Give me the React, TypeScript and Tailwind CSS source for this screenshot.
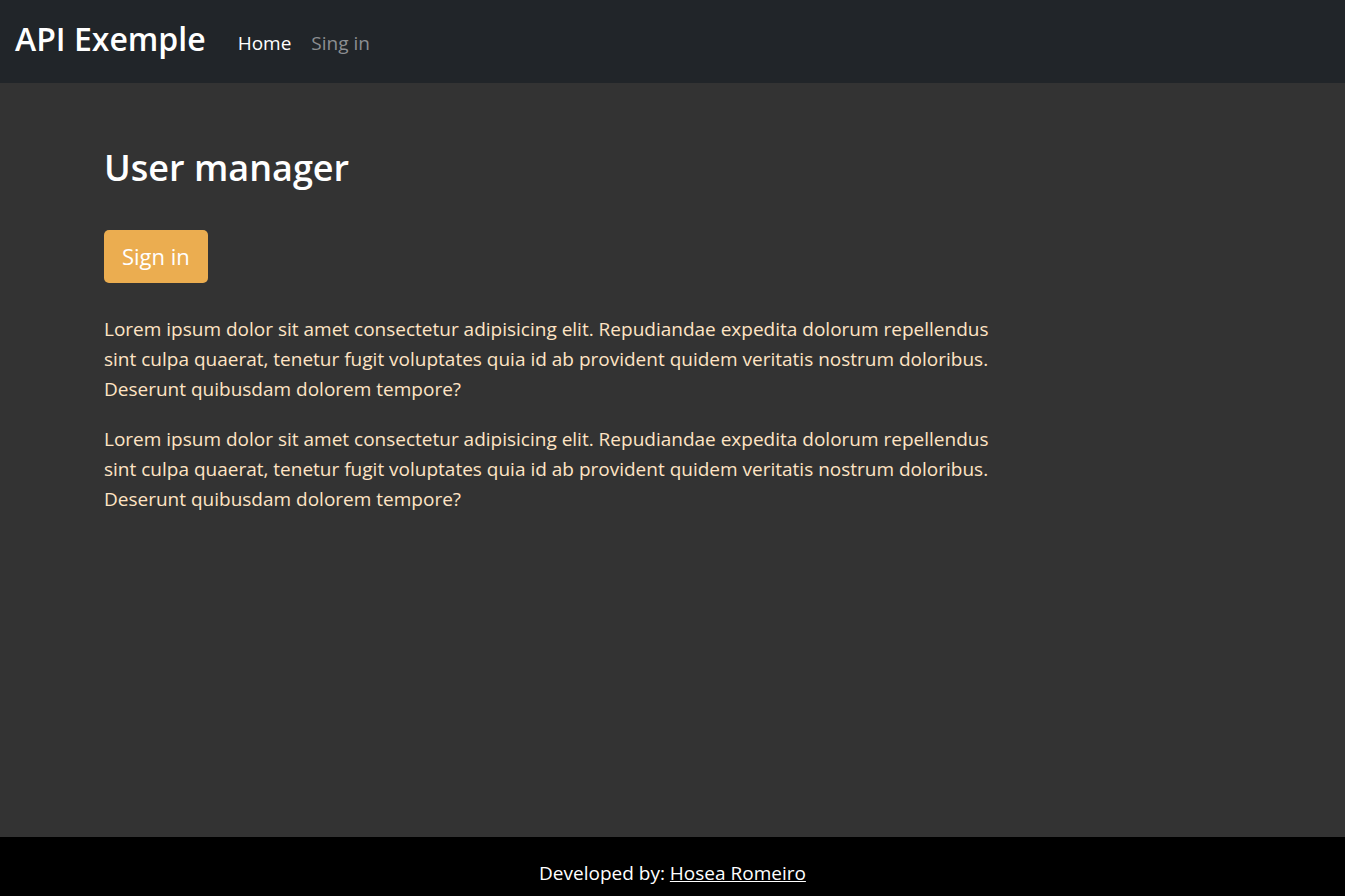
import React from "react";

const lorem =
  "Lorem ipsum dolor sit amet consectetur adipisicing elit. Repudiandae expedita dolorum repellendus sint culpa quaerat, tenetur fugit voluptates quia id ab provident quidem veritatis nostrum doloribus. Deserunt quibusdam dolorem tempore?";

export default function App() {
  return (
    <div className="min-h-screen bg-[#333333]" style={{ fontFamily: '"Open Sans", "Noto Sans", sans-serif' }}>
      <nav className="h-[83px] bg-[#212529] flex items-center px-[15px]">
        <span className="text-white text-[32px] font-semibold leading-none mr-[32px] -mt-[5px]">API Exemple</span>
        <a className="text-white text-[19px] mr-[20px] mt-[3px]">Home</a>
        <a className="text-[#8c8e91] text-[19px] mt-[3px]">Sing in</a>
      </nav>
      <main className="h-[754px] pl-[104px] pt-[63px]">
        <div className="max-w-[900px]">
          <h1 className="text-white text-[36px] font-semibold leading-[1.2] mb-[41px]">User manager</h1>
          <button className="bg-[#ebad50] text-white text-[22px] h-[53px] px-[18px] rounded-[5px] mb-[31px]">Sign in</button>
          <p className="text-[#ffe4c4] text-[19px] leading-[30px] mb-[20px]">{lorem}</p>
          <p className="text-[#ffe4c4] text-[19px] leading-[30px]">{lorem}</p>
        </div>
      </main>
      <footer className="bg-black text-white text-center text-[19px] leading-[26px] pt-[23px] pb-[20px]">
        <div>
          Developed by: <a className="underline">Hosea Romeiro</a>
        </div>
        <div className="mt-[6px]">© 2022</div>
      </footer>
    </div>
  );
}
